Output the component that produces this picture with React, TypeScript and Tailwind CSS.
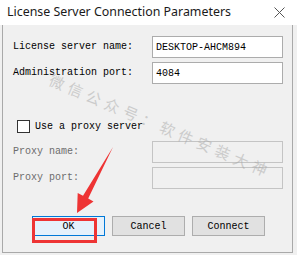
const mono = { fontFamily: '"Liberation Mono", "DejaVu Sans Mono", monospace' };

function Field({ label, value, disabled }: { label: string; value?: string; disabled?: boolean }) {
  return (
    <div className="flex items-center h-[22px]">
      <span className={`w-[139px] text-[10px] leading-none ${disabled ? "text-[#6d6d6d]" : "text-black"}`}>{label}</span>
      <div
        className={`w-[131px] h-[22px] border flex items-center px-[3px] text-[10px] ${
          disabled ? "border-[#c4c4c4] bg-[#f0f0f0]" : "border-[#acacac] bg-white text-black"
        }`}
      >
        {value}
      </div>
    </div>
  );
}

function Btn({ label, focused }: { label: string; focused?: boolean }) {
  return (
    <div
      className={`w-[73px] h-[20px] border flex items-center justify-center text-[10px] text-black ${
        focused ? "border-[#0078d7] bg-[#e5f1fb]" : "border-[#adadad] bg-[#e1e1e1]"
      }`}
    >
      {label}
    </div>
  );
}

export default function App() {
  return (
    <div className="relative w-[297px] h-[255px] bg-[#f0f0f0] overflow-hidden">
      {/* Title bar */}
      <div className="h-[25px] bg-white flex items-center justify-between pl-[7px] pr-[12px]">
        <span className="text-[12.4px] text-[#1a1a1a]" style={{ fontFamily: '"Noto Sans", sans-serif' }}>
          License Server Connection Parameters
        </span>
        <svg width="11" height="11" viewBox="0 0 11 11" stroke="#555" strokeWidth="1" fill="none">
          <line x1="0.5" y1="0.5" x2="10.5" y2="10.5" />
          <line x1="10.5" y1="0.5" x2="0.5" y2="10.5" />
        </svg>
      </div>

      {/* Body */}
      <div className="ml-[2px] w-[291px] h-[228px] border-x border-b border-[#a9a9a9] pl-[10px]" style={mono}>
        <div className="pt-[11px] flex flex-col gap-[4px]">
          <Field label="License server name:" value="DESKTOP-AHCM894" />
          <Field label="Administration port:" value="4084" />
        </div>

        <div className="mt-[36px] ml-[4px] flex items-center h-[13px] gap-[5px]">
          <div className="w-[13px] h-[13px] border border-[#333] bg-white" />
          <span className="text-[10px] text-black">Use a proxy server</span>
        </div>

        <div className="mt-[8px] flex flex-col gap-[4px]">
          <Field label="Proxy name:" disabled />
          <Field label="Proxy port:" disabled />
        </div>

        <div className="mt-[27px] ml-[19px] flex gap-[7px]">
          <Btn label="OK" focused />
          <Btn label="Cancel" />
          <Btn label="Connect" />
        </div>
      </div>

      {/* Watermark */}
      <div
        className="absolute left-[50px] top-[68px] origin-left rotate-[23deg] text-[15px] tracking-[5px] text-[#a8a8a8] opacity-50 whitespace-nowrap pointer-events-none"
        style={{ fontFamily: '"Noto Sans CJK SC", sans-serif' }}
      >
        微信公众号：软件安装大神
      </div>

      {/* Red highlight box */}
      <div className="absolute left-[32px] top-[218px] w-[65px] h-[25px] border-[3px] border-[#ee3434]" />

      {/* Red arrow */}
      <svg className="absolute left-0 top-0 pointer-events-none" width="297" height="255">
        <polygon
          points="113,147 88.2,198.6 93.5,201.5 77,213 77.7,192.9 83,195.8"
          fill="#ee3434"
        />
      </svg>
    </div>
  );
}
